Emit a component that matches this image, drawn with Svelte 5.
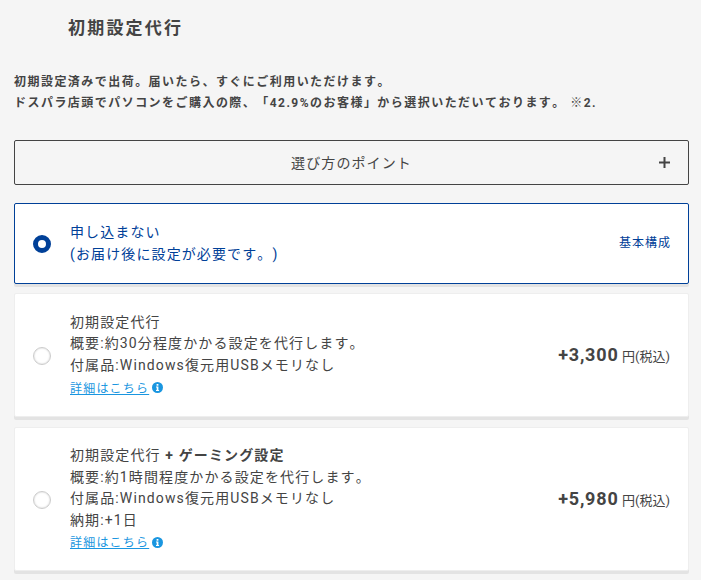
<script>
  const options = [
    {
      title: "初期設定代行",
      lines: ["概要:約30分程度かかる設定を代行します。", "付属品:Windows復元用USBメモリなし"],
      price: "+3,300"
    },
    {
      title: "初期設定代行",
      strong: "+ ゲーミング設定",
      lines: ["概要:約1時間程度かかる設定を代行します。", "付属品:Windows復元用USBメモリなし", "納期:+1日"],
      price: "+5,980"
    }
  ];
</script>

<div class="page">
  <h2>初期設定代行</h2>
  <p class="lead">
    初期設定済みで出荷。届いたら、すぐにご利用いただけます。<br />
    ドスパラ店頭でパソコンをご購入の際、「42.9%のお客様」から選択いただいております。 ※2.
  </p>

  <button class="guide">
    <span>選び方のポイント</span>
    <svg class="plus" width="11" height="11" viewBox="0 0 11 11"><path d="M5.5 0v11M0 5.5h11" stroke="#444" stroke-width="2" /></svg>
  </button>

  <div class="option selected">
    <span class="radio on"></span>
    <div class="body">
      <div>申し込まない</div>
      <div>(お届け後に設定が必要です。)</div>
    </div>
    <div class="base">基本構成</div>
  </div>

  {#each options as opt}
    <div class="option">
      <span class="radio"></span>
      <div class="body">
        <div>{opt.title}{#if opt.strong}&nbsp;<b>{opt.strong}</b>{/if}</div>
        {#each opt.lines as line}
          <div>{line}</div>
        {/each}
        <div class="more">
          <a href="#top">詳細はこちら</a>
          <svg class="info" width="11" height="11" viewBox="0 0 11 11">
            <circle cx="5.5" cy="5.5" r="5.5" fill="#1a96e0" />
            <rect x="4.6" y="2" width="1.8" height="1.7" fill="#fff" />
            <path d="M4 4.6h2.4v3.5h.7v1H4v-1h.7V5.6H4z" fill="#fff" />
          </svg>
        </div>
      </div>
      <div class="price"><strong>{opt.price}</strong> <span class="yen">円</span><span class="tax">(税込)</span></div>
    </div>
  {/each}
</div>

<style>
  :global(body) {
    margin: 0;
    background: #f5f5f5;
  }

  .page {
    padding: 0 12px 0 14px;
    height: 580px;
    box-sizing: border-box;
    overflow: hidden;
    font-family: Roboto, "Noto Sans CJK JP", sans-serif;
    color: #444;
    text-spacing-trim: space-all;
    font-kerning: none;
  }

  h2 {
    margin: 0;
    padding: 16px 0 0 54px;
    font-size: 17px;
    line-height: 24px;
    font-weight: 700;
    letter-spacing: 2.2px;
  }

  .lead {
    margin: 32px 0 0;
    font-size: 12px;
    line-height: 21px;
    font-weight: 700;
    letter-spacing: 1.46px;
  }

  .guide {
    display: flex;
    align-items: center;
    justify-content: center;
    position: relative;
    width: 100%;
    height: 45px;
    margin-top: 26px;
    padding: 0 0 1px;
    background: #f5f5f5;
    border: 1px solid #444;
    border-radius: 2px;
    font: inherit;
    font-size: 14px;
    letter-spacing: 0.08em;
    color: #444;
  }

  .plus {
    position: absolute;
    right: 18px;
    top: 16px;
  }

  .option {
    display: flex;
    align-items: center;
    box-sizing: border-box;
    min-height: 124px;
    margin-top: 10px;
    padding: 17px 18px 15px;
    background: #fff;
    border: 1px solid #eee;
    border-radius: 2px;
    box-shadow: 0 3px 0 #e3e3e3;
    font-size: 14px;
    line-height: 21.6px;
    letter-spacing: 0.08em;
  }

  .option.selected {
    min-height: 0;
    height: 81px;
    margin-top: 18px;
    padding: 0 18px;
    border: 1px solid #004098;
    color: #004098;
  }

  .option.selected + .option {
    margin-top: 9px;
  }

  .radio {
    flex: none;
    box-sizing: border-box;
    width: 18px;
    height: 18px;
    margin-right: 19px;
    background: #fff;
    border: 1px solid #ccc;
    border-radius: 50%;
    box-shadow: inset 0 0 2px #ccc;
  }

  .radio.on {
    border: 5.5px solid #004098;
    box-shadow: none;
  }

  .body {
    flex: 1;
  }

  .base {
    font-size: 12px;
    font-weight: 400;
    letter-spacing: 1px;
    margin-right: -1px;
  }

  .more {
    display: flex;
    align-items: center;
    gap: 3px;
    padding-top: 2px;
    font-size: 12px;
    letter-spacing: 1.2px;
  }

  .more a {
    color: #1a96e0;
  }

  .info {
    margin-top: -3px;
  }

  .price {
    white-space: nowrap;
    letter-spacing: 0;
  }

  .price strong {
    font-size: 18px;
    letter-spacing: 0.8px;
  }

  .yen,
  .tax {
    font-size: 13px;
  }
</style>
